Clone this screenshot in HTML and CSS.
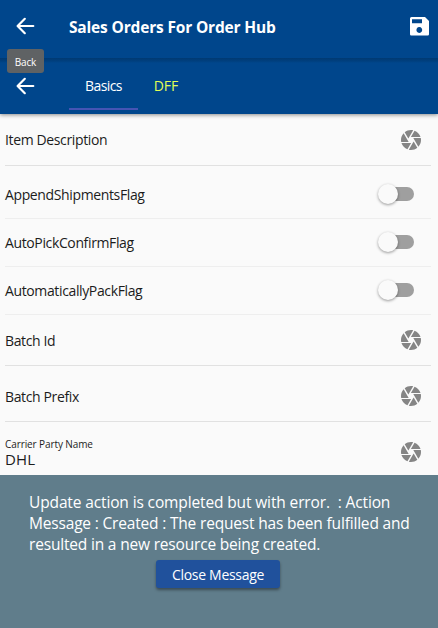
FILE: index.html
```html
<!DOCTYPE html>
<html lang="en">
<head>
<meta charset="utf-8">
<title>Sales Orders For Order Hub</title>
<link rel="stylesheet" href="styles.css">
</head>
<body>
<svg class="defs" width="0" height="0">
  <symbol id="camera" viewBox="0 0 24 24"><path d="M9.4 10.5l4.77-8.26C13.47 2.09 12.75 2 12 2c-2.4 0-4.6.85-6.32 2.25l3.66 6.35.06-.1zM21.54 9c-.92-2.92-3.15-5.26-6-6.34L11.88 9h9.66zm.26 1h-7.49l.29.5 4.76 8.25C21 16.97 22 14.61 22 12c0-.69-.07-1.35-.2-2zM8.54 12l-3.9-6.75C3.01 7.03 2 9.39 2 12c0 .69.07 1.35.2 2h7.49l-1.15-2zm-6.08 3c.92 2.92 3.15 5.26 6 6.34L12.12 15H2.46zm11.27 0l-3.9 6.76c.7.15 1.42.24 2.17.24 2.4 0 4.6-.85 6.32-2.25l-3.66-6.35-.93 1.6z"/></symbol>
  <symbol id="back" viewBox="0 0 24 24"><path d="M20.3 12H5M11.8 4.8L4.6 12l7.2 7.2" fill="none" stroke="#fff" stroke-width="2.2" stroke-linecap="round" stroke-linejoin="round"/></symbol>
</svg>
<div class="app">
  <header class="topbar">
    <button class="icon-btn"><svg class="icon"><use href="#back"/></svg><span class="tooltip">Back</span></button>
    <h1 class="title">Sales Orders For Order Hub</h1>
    <svg class="save" viewBox="0 0 19 19"><path fill="#fff" fill-rule="evenodd" d="M1.5 0H15l4 4v13.2a1.3 1.3 0 0 1-1.3 1.3H1.3A1.3 1.3 0 0 1 0 17.2V1.5A1.5 1.5 0 0 1 1.5 0zM2 2.2v4h10v-4zM9.3 10.1a2.9 2.9 0 1 0 .01 0z"/></svg>
  </header>
  <nav class="tabbar">
    <button class="icon-btn"><svg class="icon"><use href="#back"/></svg></button>
    <div class="tab tab-active">Basics</div>
    <div class="tab tab-dff">DFF</div>
  </nav>
  <main class="form">
    <div class="row row-first"><span>Item Description</span><svg class="camera"><use href="#camera"/></svg></div>
    <div class="row row-toggle row-toggle-first"><span>AppendShipmentsFlag</span><span class="toggle"><span class="thumb"></span></span></div>
    <div class="row row-toggle"><span>AutoPickConfirmFlag</span><span class="toggle"><span class="thumb"></span></span></div>
    <div class="row row-toggle"><span>AutomaticallyPackFlag</span><span class="toggle"><span class="thumb"></span></span></div>
    <div class="row row-id"><span>Batch Id</span><svg class="camera"><use href="#camera"/></svg></div>
    <div class="row row-prefix"><span>Batch Prefix</span><svg class="camera"><use href="#camera"/></svg></div>
    <div class="row row-carrier"><div class="stack"><span class="small">Carrier Party Name</span><span class="value">DHL</span></div><svg class="camera"><use href="#camera"/></svg></div>
  </main>
  <section class="message">
    <p class="text"><span class="line-first">Update action is completed but with error.&nbsp; : Action</span><br>Message : Created : The request has been fulfilled and<br>resulted in a new resource being created.</p>
    <button class="close">Close Message</button>
  </section>
</div>
</body>
</html>
```
FILE: styles.css
```css
* { box-sizing: border-box; }
body { margin: 0; font-family: "Open Sans", "Noto Sans", sans-serif; background: #fafafa; color: #1c1c1c; }
button { font: inherit; color: inherit; border: 0; padding: 0; background: none; }
span { white-space: nowrap; }
.defs { position: absolute; }
.app { width: 438px; height: 628px; overflow: hidden; display: flex; flex-direction: column; }
.topbar { position: relative; z-index: 2; height: 58px; flex: none; display: flex; align-items: center; background: #00468c; padding: 0 9px 6px 5px; }
.icon-btn { position: relative; width: 40px; height: 40px; display: flex; align-items: center; justify-content: center; }
.icon { width: 24px; height: 24px; }
.tooltip { position: absolute; left: 2px; top: 43px; width: 37px; height: 24px; border-radius: 3px; background: #5f6264; color: #fff; font-size: 10px; line-height: 27px; letter-spacing: -0.2px; text-align: center; }
.title { flex: 1; margin: 2px 0 0 24px; color: #fff; font-size: 15.5px; line-height: 22px; font-weight: 700; letter-spacing: -0.17px; white-space: nowrap; }
.save { width: 19px; height: 19px; }
.tabbar { position: relative; height: 56px; flex: none; display: flex; padding-left: 5px; background: linear-gradient(#003a73, #003f7e 3px, #00468c 5px); color: #fff; font-size: 14px; box-shadow: 0 1px 4px rgba(0,0,0,.45); }
.tabbar .icon-btn { margin-top: 8px; }
.tab { height: 52px; line-height: 56px; text-align: center; }
.tab-active { width: 69px; margin-left: 24px; border-bottom: 2px solid #4554b4; letter-spacing: -0.6px; }
.tab-dff { width: 56px; color: #e2ff55; }
.form { height: 361px; flex: none; padding: 0 7px 0 5px; overflow: hidden; font-size: 14px; letter-spacing: -0.37px; }
.row { display: flex; align-items: center; justify-content: space-between; border-bottom: 1px solid #e1e1e1; }
.row-first { height: 52px; }
.row-toggle { height: 48px; border-color: #eee; padding-right: 17px; }
.row-toggle-first { height: 53px; padding-top: 5px; }
.row-id { height: 51px; }
.row-prefix { height: 56px; padding-top: 5px; }
.row-carrier { height: 60px; border: 0; }
.camera { width: 24px; height: 24px; margin-right: 8px; fill: #858585; }
.toggle { position: relative; width: 35px; height: 14px; margin-bottom: 2px; border-radius: 7px; background: #9f9f9f; }
.thumb { position: absolute; left: -1px; top: -3px; width: 20px; height: 20px; border-radius: 50%; background: #fafafa; box-shadow: 0 1px 3px rgba(0,0,0,.4); }
.stack { display: flex; flex-direction: column; padding-top: 1px; }
.small { font-size: 10px; line-height: 14px; letter-spacing: -0.1px; }
.value { font-size: 15px; line-height: 17px; letter-spacing: 0.2px; }
.message { flex: 1; background: #607d8b; color: #fff; padding: 17px 28px 0 29px; display: flex; flex-direction: column; align-items: center; }
.text { margin: 0; width: 100%; font-size: 15.5px; line-height: 21px; letter-spacing: -0.18px; white-space: nowrap; }
.line-first { letter-spacing: -0.13px; }
.close { width: 124px; height: 28px; margin: 5px 3px 0 0; border-radius: 3px; background: #20519c; font-size: 14px; line-height: 30px; letter-spacing: -0.3px; box-shadow: 0 2px 3px rgba(0,0,0,.4); }
```
